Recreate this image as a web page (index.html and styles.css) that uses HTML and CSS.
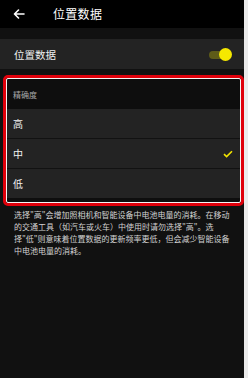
FILE: index.html
```html
<!DOCTYPE html>
<html lang="zh-CN">
<head>
<meta charset="utf-8">
<link rel="stylesheet" href="styles.css">
</head>
<body>
<div class="screen">
  <header class="topbar">
    <svg class="back" width="12" height="10" viewBox="0 0 12 10">
      <path d="M11 5H1.5M5.5 1L1.5 5L5.5 9" fill="none" stroke="#fff" stroke-width="1.6" stroke-linecap="round" stroke-linejoin="round"/>
    </svg>
    <span class="title">位置数据</span>
  </header>
  <div class="gap"></div>
  <div class="row setting">
    <span>位置数据</span>
    <span class="toggle"><span class="track"></span><span class="knob"></span></span>
  </div>
  <div class="highlight">
    <div class="inner">
      <div class="subhead">精确度</div>
      <div class="opt">高</div>
      <div class="opt">中<svg class="check" width="10" height="8" viewBox="0 0 10 8"><path d="M1 4.2L3.6 6.6L9 1.2" fill="none" stroke="#f2e400" stroke-width="1.6"/></svg></div>
      <div class="opt last">低</div>
      <div class="tail"></div>
    </div>
  </div>
  <p class="desc"><span>选择"高"会增加照相机和智能设备中电池电量的消耗。在移动</span><span>的交通工具（如汽车或火车）中使用时请勿选择"高"。选</span><span>择"低"则意味着位置数据的更新频率更低，但会减少智能设备</span><span>中电池电量的消耗。</span></p>
</div>
</body>
</html>
```
FILE: styles.css
```css
* { box-sizing: border-box; }
html, body { margin: 0; padding: 0; }
body {
  background: #ebebeb;
  font-family: "Noto Sans CJK SC", "Noto Sans", sans-serif;
  width: 248px;
  height: 378px;
  overflow: hidden;
}
.screen {
  width: 244px;
  height: 378px;
  background: #111111;
}
.topbar {
  height: 28px;
  background: #000;
  display: flex;
  align-items: center;
  padding-left: 13px;
}
.back { display: block; }
.title {
  color: #fff;
  font-size: 12px;
  margin-left: 28px;
  line-height: 1;
  letter-spacing: 0.3px;
}
.gap { height: 11px; }
.row {
  display: flex;
  align-items: center;
  justify-content: space-between;
}
.setting {
  height: 30px;
  background: #232323;
  color: #f0f0f0;
  font-size: 10.5px;
  padding: 0 12px 0 14px;
}
.toggle {
  position: relative;
  width: 23px;
  height: 13px;
  display: block;
}
.track {
  position: absolute;
  left: 0;
  top: 3px;
  width: 18px;
  height: 8px;
  border-radius: 4px;
  background: #5e5b18;
}
.knob {
  position: absolute;
  right: 0;
  top: 0;
  width: 13px;
  height: 13px;
  border-radius: 50%;
  background: #f5e800;
}
.highlight {
  margin: 6px 0 0 3px;
  width: 241px;
  border: 3px solid #e0000b;
  border-radius: 5px;
}
.inner {
  border: 1px solid #f4f4f4;
  border-radius: 2px;
  background: #0e0e0e;
}
.subhead {
  height: 30px;
  display: flex;
  align-items: center;
  padding-left: 6px;
  color: #a8a8a8;
  font-size: 8px;
}
.opt {
  height: 30px;
  background: #232323;
  border-bottom: 1px solid #121212;
  color: #f2f2f2;
  font-size: 10px;
  display: flex;
  align-items: center;
  justify-content: space-between;
  padding: 0 7px 0 6px;
}
.opt.last { border-bottom: none; height: 29px; }
.check { display: block; }
.tail { height: 4px; }
.desc {
  margin: 3px 0 0;
  padding-left: 14px;
  color: #d2d2d2;
  font-size: 8px;
  line-height: 12px;
}
.desc span { display: block; white-space: nowrap; }
```
